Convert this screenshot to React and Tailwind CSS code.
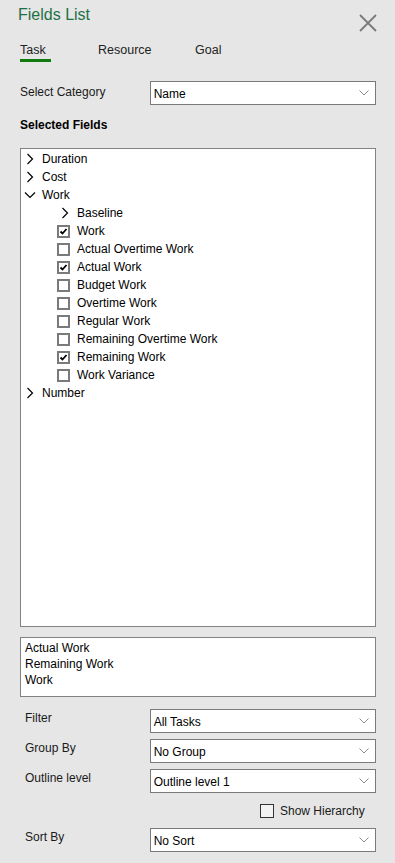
import React from "react";

const font = { fontFamily: '"Liberation Sans", Arial, sans-serif' };

function Chevron({ down = false }) {
  return down ? (
    <svg width="12" height="12" viewBox="0 0 12 12" className="shrink-0">
      <path d="M1 3.5 L6 8.5 L11 3.5" fill="none" stroke="#000" strokeWidth="1.2" />
    </svg>
  ) : (
    <svg width="10" height="12" viewBox="0 0 10 12" className="shrink-0">
      <path d="M2.5 1 L7.5 6 L2.5 11" fill="none" stroke="#000" strokeWidth="1.2" />
    </svg>
  );
}

function Check({ checked }) {
  return (
    <div className="w-[13px] h-[13px] border-2 border-[#7a7a7a] bg-white flex items-center justify-center shrink-0">
      {checked && (
        <svg width="9" height="9" viewBox="0 0 9 9">
          <path d="M1.5 4.5 L3.5 6.5 L7.5 2" fill="none" stroke="#000" strokeWidth="1.8" />
        </svg>
      )}
    </div>
  );
}

function Select({ value }) {
  return (
    <div className="w-[227px] h-[24px] border border-[#7a7a7a] bg-white flex items-center justify-between pl-[3px] pr-[6px]">
      <span className="text-[12px] text-black pt-[2px]">{value}</span>
      <svg width="10" height="6" viewBox="0 0 10 6">
        <path d="M0.5 0.5 L5 5 L9.5 0.5" fill="none" stroke="#8a8a8a" strokeWidth="1" />
      </svg>
    </div>
  );
}

export default function App() {
  const items = [
    ["Work", true],
    ["Actual Overtime Work", false],
    ["Actual Work", true],
    ["Budget Work", false],
    ["Overtime Work", false],
    ["Regular Work", false],
    ["Remaining Overtime Work", false],
    ["Remaining Work", true],
    ["Work Variance", false],
  ];
  return (
    <div style={font} className="w-[395px] h-[863px] bg-[#e6e6e6] pl-[20px] pr-[19px] flex flex-col text-[12px] text-[#1a1a1a]">
      <div className="flex justify-between items-start h-[33px]">
        <div className="-ml-[2px] mt-[3px] h-[24px] leading-[24px] text-[16px] text-[#1e7045]">Fields List</div>
        <svg width="20" height="20" viewBox="0 0 20 20" className="mt-[13px] -mr-[2px]">
          <path d="M2 2 L18 18 M18 2 L2 18" stroke="#7a7a7a" strokeWidth="1.8" fill="none" />
        </svg>
      </div>
      <div className="flex mt-[9px] h-[16px] leading-[16px] text-[12.5px] text-[#222]">
        <div className="w-[78px]">Task</div>
        <div className="w-[97px]">Resource</div>
        <div>Goal</div>
      </div>
      <div className="mt-[1px] w-[31px] h-[3px] bg-[#107c10]" />
      <div className="flex items-center mt-[19px] h-[24px]">
        <div className="w-[130px] pb-[2px]">Select Category</div>
        <Select value="Name" />
      </div>
      <div className="mt-[12px] h-[16px] leading-[16px] font-bold text-black">Selected Fields</div>
      <div className="mt-[15px] h-[479px] border border-[#828282] bg-white text-black pt-[1px]">
        {[
          ["Duration", false],
          ["Cost", false],
          ["Work", true],
        ].map(([t, d]) => (
          <div key={t} className="h-[18px] flex items-center pl-[3px]">
            {d ? (
              <>
                <Chevron down />
                <span className="ml-[6px]">{t}</span>
              </>
            ) : (
              <>
                <span className="ml-[1px]" />
                <Chevron />
                <span className="ml-[7px]">{t}</span>
              </>
            )}
          </div>
        ))}
        <div className="h-[18px] flex items-center pl-[39px]">
          <Chevron />
          <span className="ml-[7px]">Baseline</span>
        </div>
        {items.map(([t, c]) => (
          <div key={t} className="h-[18px] flex items-center pl-[36px]">
            <Check checked={c} />
            <span className="ml-[7px]">{t}</span>
          </div>
        ))}
        <div className="h-[18px] flex items-center pl-[4px]">
          <Chevron />
          <span className="ml-[7px]">Number</span>
        </div>
      </div>
      <div className="mt-[10px] h-[60px] border border-[#828282] bg-white pl-[4px] pt-[2px] text-black leading-[16px]">
        <div>Actual Work</div>
        <div>Remaining Work</div>
        <div>Work</div>
      </div>
      <div className="mt-[12px] flex flex-col gap-[6px]">
        {[
          ["Filter", "All Tasks"],
          ["Group By", "No Group"],
          ["Outline level", "Outline level 1"],
        ].map(([l, v]) => (
          <div key={l} className="flex items-start h-[24px]">
            <div className="w-[130px] pl-[5px] pt-[1px] leading-[16px]">{l}</div>
            <Select value={v} />
          </div>
        ))}
      </div>
      <div className="mt-[11px] h-[14px] flex items-center pl-[240px]">
        <div className="w-[14px] h-[14px] border border-[#333] bg-[#f3f3f3]" />
        <span className="ml-[6px] text-[#1a1a1a]">Show Hierarchy</span>
      </div>
      <div className="mt-[10px] flex items-start h-[24px]">
        <div className="w-[130px] pl-[5px] pt-[1px] leading-[16px]">Sort By</div>
        <Select value="No Sort" />
      </div>
    </div>
  );
}
